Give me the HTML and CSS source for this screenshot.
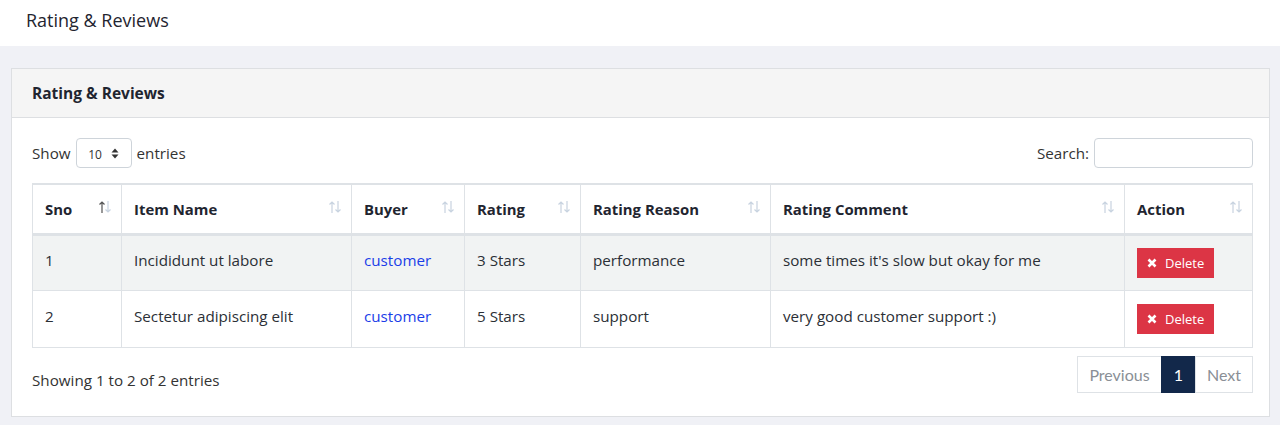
FILE: index.html
```html
<!DOCTYPE html>
<html>
<head>
<meta charset="utf-8">
<link rel="stylesheet" href="styles.css">
</head>
<body>
<header class="topbar"><h1 class="page-title">Rating &amp; Reviews</h1></header>
<main class="content">
  <section class="card">
    <div class="card-header">Rating &amp; Reviews</div>
    <div class="card-body">
      <div class="controls">
        <label class="length">Show <span class="select">10 <svg width="8" height="11" viewBox="0 0 8 11"><path d="M4 0.5 L7.5 4.5 H0.5 Z M4 10.5 L7.5 6.5 H0.5 Z" fill="#333"/></svg></span> entries</label>
        <label class="search">Search: <span class="search-input"></span></label>
      </div>
      <table class="grid">
        <colgroup>
          <col style="width:89px"><col style="width:230px"><col style="width:113px"><col style="width:116px"><col style="width:190px"><col style="width:354px"><col style="width:128px">
        </colgroup>
        <thead>
          <tr>
            <th><div class="th"><span>Sno</span><svg class="sort" width="14" height="14" viewBox="0 0 14 14"><path d="M4 13V2M1.5 4.5L4 2L6.5 4.5" stroke="#555" stroke-width="1.2" fill="none"/><path d="M10 1V12M7.5 9.5L10 12L12.5 9.5" stroke="#c8d3e0" stroke-width="1.2" fill="none"/></svg></div></th>
            <th><div class="th"><span>Item Name</span><svg class="sort" width="14" height="14" viewBox="0 0 14 14"><path d="M4 13V2M1.5 4.5L4 2L6.5 4.5" stroke="#c8d3e0" stroke-width="1.2" fill="none"/><path d="M10 1V12M7.5 9.5L10 12L12.5 9.5" stroke="#c8d3e0" stroke-width="1.2" fill="none"/></svg></div></th>
            <th><div class="th"><span>Buyer</span><svg class="sort" width="14" height="14" viewBox="0 0 14 14"><path d="M4 13V2M1.5 4.5L4 2L6.5 4.5" stroke="#c8d3e0" stroke-width="1.2" fill="none"/><path d="M10 1V12M7.5 9.5L10 12L12.5 9.5" stroke="#c8d3e0" stroke-width="1.2" fill="none"/></svg></div></th>
            <th><div class="th"><span>Rating</span><svg class="sort" width="14" height="14" viewBox="0 0 14 14"><path d="M4 13V2M1.5 4.5L4 2L6.5 4.5" stroke="#c8d3e0" stroke-width="1.2" fill="none"/><path d="M10 1V12M7.5 9.5L10 12L12.5 9.5" stroke="#c8d3e0" stroke-width="1.2" fill="none"/></svg></div></th>
            <th><div class="th"><span>Rating Reason</span><svg class="sort" width="14" height="14" viewBox="0 0 14 14"><path d="M4 13V2M1.5 4.5L4 2L6.5 4.5" stroke="#c8d3e0" stroke-width="1.2" fill="none"/><path d="M10 1V12M7.5 9.5L10 12L12.5 9.5" stroke="#c8d3e0" stroke-width="1.2" fill="none"/></svg></div></th>
            <th><div class="th"><span>Rating Comment</span><svg class="sort" width="14" height="14" viewBox="0 0 14 14"><path d="M4 13V2M1.5 4.5L4 2L6.5 4.5" stroke="#c8d3e0" stroke-width="1.2" fill="none"/><path d="M10 1V12M7.5 9.5L10 12L12.5 9.5" stroke="#c8d3e0" stroke-width="1.2" fill="none"/></svg></div></th>
            <th><div class="th"><span>Action</span><svg class="sort" width="14" height="14" viewBox="0 0 14 14"><path d="M4 13V2M1.5 4.5L4 2L6.5 4.5" stroke="#c8d3e0" stroke-width="1.2" fill="none"/><path d="M10 1V12M7.5 9.5L10 12L12.5 9.5" stroke="#c8d3e0" stroke-width="1.2" fill="none"/></svg></div></th>
          </tr>
        </thead>
        <tbody>
          <tr class="odd">
            <td>1</td><td>Incididunt ut labore</td><td><a class="link">customer</a></td><td>3 Stars</td><td>performance</td><td>some times it's slow but okay for me</td>
            <td><button class="btn-delete"><svg width="10" height="10" viewBox="0 0 10 10"><path d="M1.5 1.5L8.5 8.5M8.5 1.5L1.5 8.5" stroke="#fff" stroke-width="2.6"/></svg>Delete</button></td>
          </tr>
          <tr>
            <td>2</td><td>Sectetur adipiscing elit</td><td><a class="link">customer</a></td><td>5 Stars</td><td>support</td><td>very good customer support :)</td>
            <td><button class="btn-delete"><svg width="10" height="10" viewBox="0 0 10 10"><path d="M1.5 1.5L8.5 8.5M8.5 1.5L1.5 8.5" stroke="#fff" stroke-width="2.6"/></svg>Delete</button></td>
          </tr>
        </tbody>
      </table>
      <div class="footer-row">
        <div class="info">Showing 1 to 2 of 2 entries</div>
        <nav class="pager">
          <span class="page prev">Previous</span><span class="page current">1</span><span class="page next">Next</span>
        </nav>
      </div>
    </div>
  </section>
</main>
</body>
</html>
```
FILE: styles.css
```css
* { box-sizing: border-box; }
html, body { margin: 0; padding: 0; }
body {
  background: #f0f1f6;
  font-family: "Open Sans", "Noto Sans", sans-serif;
  color: #212529;
  font-size: 15px;
  width: 1280px;
  height: 425px;
  overflow: hidden;
}
.topbar {
  background: #fff;
  height: 46px;
  padding: 0 26px;
  display: flex;
  align-items: center;
}
.page-title {
  margin: 0 0 6px;
  font-size: 18px;
  font-weight: 400;
  color: #1f2530;
}
.content { padding: 22px 10px 0 11px; }
.card {
  background: #fff;
  border: 1px solid #dddfe2;
}
.card-header {
  background: #f5f5f5;
  border-bottom: 1px solid #dddfe2;
  height: 49px;
  padding: 0 20px;
  display: flex;
  align-items: center;
  font-weight: 700;
  font-size: 15.5px;
  color: #1f2530;
}
.card-body { padding: 20px 16px 23px 20px; }
.controls {
  display: flex;
  justify-content: space-between;
  align-items: center;
  height: 30px;
  margin-bottom: 15px;
}
.length, .search {
  display: flex;
  align-items: center;
  gap: 5px;
  font-size: 15.2px;
  color: #333;
}
.select {
  width: 56px;
  height: 30px;
  border: 1px solid #ced4da;
  border-radius: 4px;
  display: flex;
  align-items: center;
  justify-content: center;
  gap: 9px;
  font-size: 12px;
  padding-top: 2px;
  color: #333;
}
.select svg { margin-top: -2px; }
.search-input {
  width: 159px;
  height: 30px;
  border: 1px solid #ced4da;
  border-radius: 4px;
  display: block;
}
.grid {
  width: 1220px;
  table-layout: fixed;
  border-collapse: collapse;
  border: 1px solid #dee2e6;
  border-top-width: 2px;
}
.grid th, .grid td {
  border: 1px solid #dee2e6;
  padding: 0 12px;
  text-align: left;
  vertical-align: middle;
}
.grid thead th {
  height: 50px;
  border-bottom: 3px solid #dee2e6;
  font-weight: 700;
  font-size: 14.9px;
  color: #1f2530;
  padding-top: 1px;
}
.th {
  display: flex;
  justify-content: space-between;
  align-items: center;
}
.sort { margin-top: -4px; margin-right: -3px; }
.grid td {
  height: 56px;
  font-size: 15.2px;
  color: #2b2f36;
  padding-bottom: 6px;
}
.grid tbody tr:last-child td { height: 57px; }
.grid tr.odd td { background: #f1f3f3; }
.link { color: #1a3ee8; text-decoration: none; }
.btn-delete {
  background: #dc3545;
  border: 0;
  color: #fff;
  width: 77px;
  height: 30px;
  font-family: "Open Sans", sans-serif;
  font-size: 13px;
  display: flex;
  align-items: center;
  gap: 8px;
  padding: 0 0 0 10px;
  margin-top: 6px;
}
.footer-row {
  display: flex;
  justify-content: space-between;
  align-items: center;
  margin-top: 8px;
}
.info { font-size: 15.2px; color: #333; padding-top: 12px; }
.pager {
  display: flex;
  font-family: "Lato", sans-serif;
  font-size: 16px;
}
.page {
  height: 37px;
  display: flex;
  align-items: center;
  justify-content: center;
  border: 1px solid #dee2e6;
  color: #8a8f96;
  background: #fff;
}
.page.prev { width: 85px; }
.page.next { width: 58px; margin-left: -1px; }
.page.current {
  background: #12284a;
  border-color: #12284a;
  color: #fff;
  width: 35px;
  margin-left: -1px;
}
```
